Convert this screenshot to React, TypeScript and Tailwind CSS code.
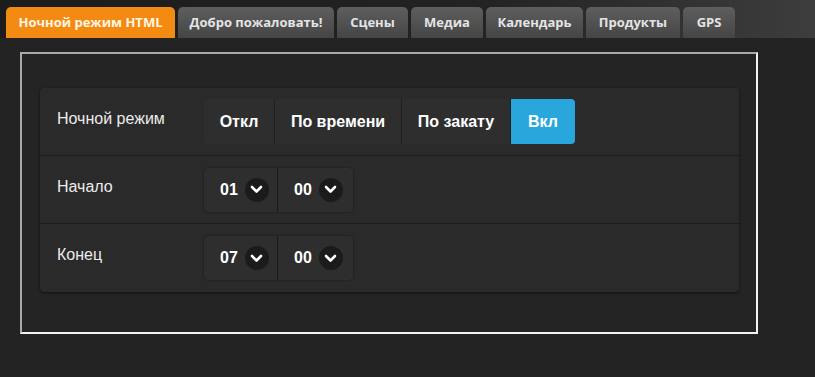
import React, { useState } from 'react';

const tabs = [
  { label: 'Ночной режим HTML', w: 'w-[169px]' },
  { label: 'Добро пожаловать!', w: 'w-[156px]' },
  { label: 'Сцены', w: 'w-[71px]' },
  { label: 'Медиа', w: 'w-[72px]' },
  { label: 'Календарь', w: 'w-[97px]' },
  { label: 'Продукты', w: 'w-[94px]' },
  { label: 'GPS', w: 'w-[52px]' },
];

const modes = [
  { label: 'Откл', w: 'w-[71px]' },
  { label: 'По времени', w: 'w-[127px]' },
  { label: 'По закату', w: 'w-[109px]' },
  { label: 'Вкл', w: 'w-[64px]' },
];

const Chevron: React.FC = () => (
  <span className="flex h-[24px] w-[24px] items-center justify-center rounded-full bg-[#1b1b1b]">
    <svg width="13" height="9" viewBox="0 0 13 9" fill="none">
      <path d="M2 2 L6.5 6.5 L11 2" stroke="#ffffff" strokeWidth="2.6" strokeLinecap="round" strokeLinejoin="round" />
    </svg>
  </span>
);

const TimeSelect: React.FC<{ hour: string; minute: string }> = ({ hour, minute }) => (
  <div className="flex h-[44px] rounded-[4px] bg-[#2e2e2e] shadow-[0_0_2px_rgba(0,0,0,0.5)]">
    <div className="flex w-[74px] items-center gap-[7px] border-r border-[#1a1a1a] pl-[16px]">
      <span className="text-[16px] font-bold text-white">{hour}</span>
      <Chevron />
    </div>
    <div className="flex w-[75px] items-center gap-[7px] pl-[16px]">
      <span className="text-[16px] font-bold text-white">{minute}</span>
      <Chevron />
    </div>
  </div>
);

const Row: React.FC<{ label: string; last?: boolean; children: React.ReactNode }> = ({ label, last, children }) => (
  <div className={`flex h-[68px] items-center ${last ? '' : 'border-b border-[#1c1c1c]'}`}>
    <div className="w-[164px] self-start pl-[17px] pt-[19px] text-[16px] text-[#ececec]">{label}</div>
    {children}
  </div>
);

export default function App() {
  const [active, setActive] = useState(0);
  const [mode, setMode] = useState(3);

  return (
    <div className="min-h-[377px] w-full bg-[#232323] font-['Liberation_Sans',Arial,sans-serif]">
      <div className="flex h-[38px] items-end gap-[3px] bg-[linear-gradient(to_right,#1c1c1c_0%,#232323_60%,#3d3d3d_100%)] pl-[6px]">
        {tabs.map((t, i) => (
          <button
            key={t.label}
            onClick={() => setActive(i)}
            className={`${t.w} flex h-[31px] items-center justify-center rounded-t-[5px] font-['Open_Sans',sans-serif] text-[13px] font-bold ${
              i === active
                ? 'bg-[#f38b12] text-[#fff6e6]'
                : 'bg-[linear-gradient(to_bottom,#5e5e5e,#454545)] text-[#e4e4e4]'
            }`}
          >
            {t.label}
          </button>
        ))}
      </div>

      <div className="ml-[20px] mt-[14px] h-[282px] w-[738px] border-2 border-t-[#a9a9a9] border-l-[#a9a9a9] border-b-[#f2f2f2] border-r-[#f2f2f2] bg-[#242424] px-[18px] pt-[34px]">
        <div className="w-[699px] rounded-[4px] bg-[#2a2a2a] shadow-[0_1px_3px_rgba(0,0,0,0.6)]">
          <Row label="Ночной режим">
            <div className="flex h-[45px]">
              {modes.map((m, i) => (
                <button
                  key={m.label}
                  onClick={() => setMode(i)}
                  className={`${m.w} flex items-center justify-center text-[16px] font-bold text-white ${
                    i === 0 ? 'rounded-l-[4px]' : ''
                  } ${i === modes.length - 1 ? 'rounded-r-[4px]' : 'border-r border-[#1f1f1f]'} ${
                    i === mode ? 'bg-[#29a7dd]' : 'bg-[#2e2e2e]'
                  }`}
                >
                  {m.label}
                </button>
              ))}
            </div>
          </Row>
          <Row label="Начало">
            <TimeSelect hour="01" minute="00" />
          </Row>
          <Row label="Конец" last>
            <TimeSelect hour="07" minute="00" />
          </Row>
        </div>
      </div>
    </div>
  );
}
